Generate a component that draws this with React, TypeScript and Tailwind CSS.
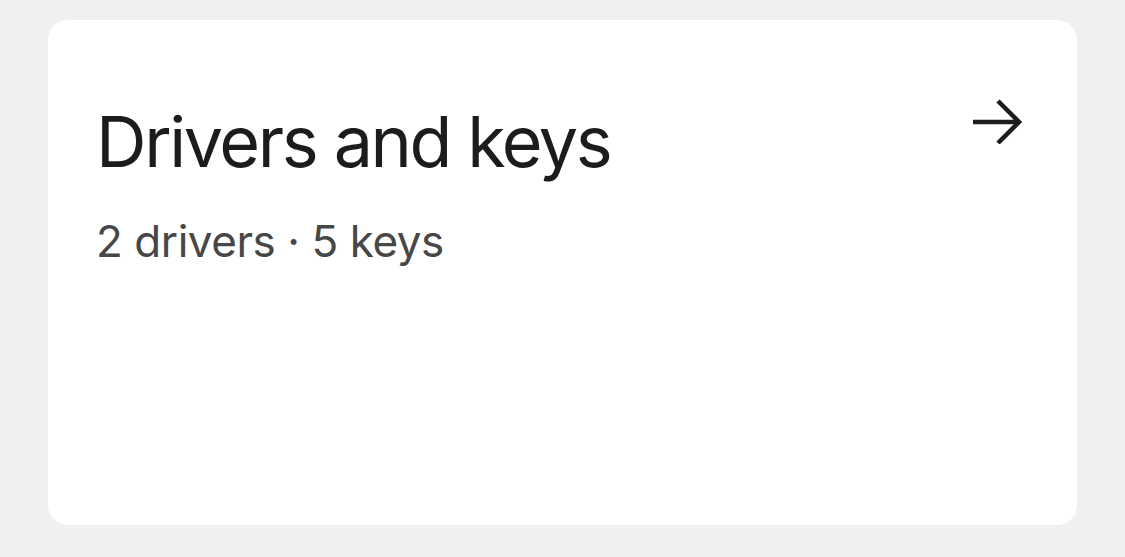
import React from "react";

export default function App() {
  return (
    <div className="w-[1125px] h-[557px] bg-[#f0f0f0] pt-[20px] pl-[48px]" style={{ fontFamily: "Inter, 'Noto Sans', sans-serif" }}>
      <div className="w-[1029px] h-[505px] bg-white rounded-[20px] flex justify-between items-start pl-[48px] pr-[54px] pt-[80px]">
        <div className="flex flex-col">
          <h1 className="text-[70px] leading-[84px] tracking-[-0.034em] text-[#1c1c1c] font-normal">Drivers and keys</h1>
          <p className="mt-[31px] text-[44px] leading-[52px] tracking-[-0.01em] text-[#474747]">2 drivers · 5 keys</p>
        </div>
        <svg width="52" height="48" viewBox="0 0 52 48" className="mt-[-4px]" fill="none" stroke="#1c1c1c" strokeWidth="4.5" strokeLinecap="butt" strokeLinejoin="miter">
          <path d="M2 26 H48" />
          <path d="M27 5 L48 26 L27 47" />
        </svg>
      </div>
    </div>
  );
}
